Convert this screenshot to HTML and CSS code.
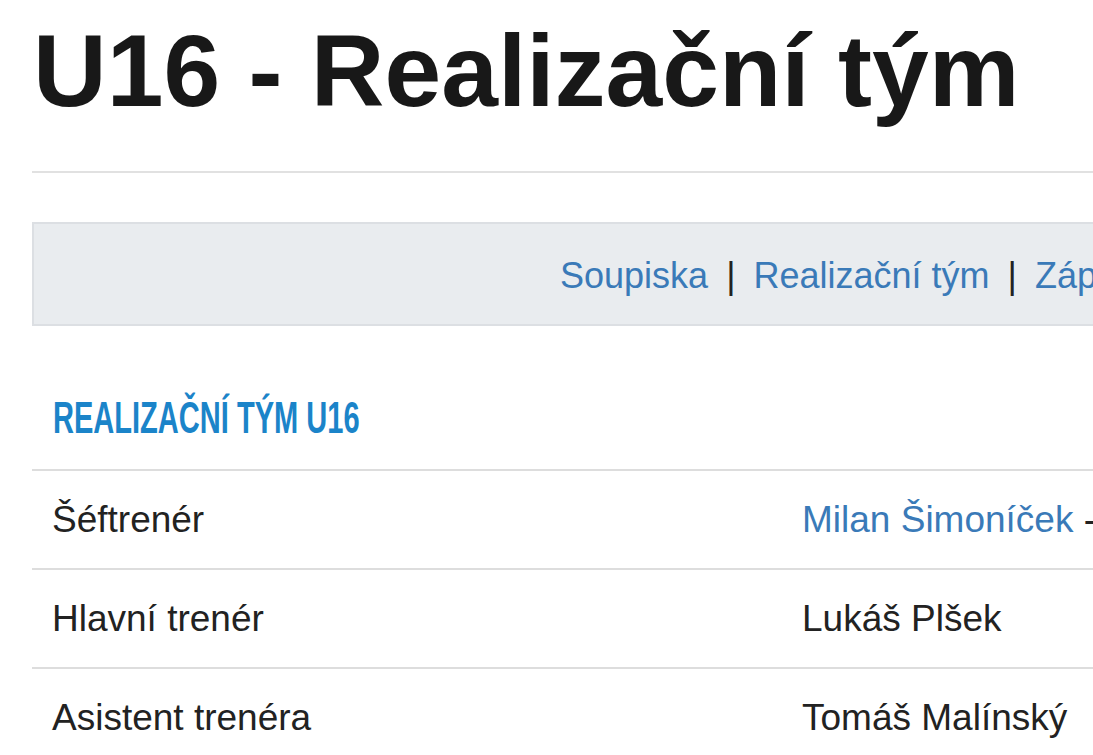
FILE: index.html
```html
<!DOCTYPE html>
<html lang="cs">
<head>
  <meta charset="UTF-8">
  <title>U16 - Realizační tým</title>
  <link rel="stylesheet" href="styles.css">
</head>
<body>
  <div class="page">
    <h1 class="page-title">U16 - Realizační tým</h1>

    <div class="team-nav">
      <a href="#">Soupiska</a> <span class="sep">|</span>
      <a href="#">Realizační tým</a> <span class="sep">|</span>
      <a href="#">Zápasy</a> <span class="sep">|</span>
      <a href="#">Statistiky</a>
    </div>

    <h3 class="section-title"><span>Realizační tým U16</span></h3>

    <table class="staff-table">
      <tbody>
        <tr>
          <td class="role">Šéftrenér</td>
          <td><a href="#">Milan Šimoníček</a> - šéftrenér mládeže</td>
        </tr>
        <tr>
          <td class="role">Hlavní trenér</td>
          <td>Lukáš Plšek</td>
        </tr>
        <tr>
          <td class="role">Asistent trenéra</td>
          <td>Tomáš Malínský</td>
        </tr>
      </tbody>
    </table>
  </div>
</body>
</html>
```

FILE: styles.css
```css
body {
  margin: 0;
  font-family: "Liberation Sans", Arial, sans-serif;
  color: #222;
  background: #fff;
  overflow: hidden;
}
a {
  color: #3a7ab8;
  text-decoration: none;
}
.page {
  width: 1500px;
  padding-left: 32px;
}
.page-title {
  margin: 0;
  padding: 20px 0 49px 1px;
  font-size: 102px;
  line-height: 1;
  font-weight: bold;
  color: #181818;
  border-bottom: 2px solid #e1e1e1;
}
.team-nav {
  margin-top: 49px;
  padding: 34px 0 30px 526px;
  font-size: 36px;
  line-height: 36px;
  background-color: #e9ecef;
  border: 2px solid #dcdfe3;
}
.team-nav .sep {
  color: #222;
  margin: 0 8px;
}
.section-title {
  margin: 70px 0 0 0;
  padding: 0 0 29px 21px;
  font-family: "Liberation Sans Narrow", "Liberation Sans", sans-serif;
  font-size: 44px;
  line-height: 1;
  font-weight: bold;
  text-transform: uppercase;
  color: #1b84c9;
}
.section-title span {
  display: inline-block;
  transform: scaleX(0.66);
  transform-origin: left center;
}
.staff-table {
  width: 100%;
  border-collapse: collapse;
  font-size: 37px;
  line-height: 37px;
}
.staff-table td {
  border-top: 2px solid #dddddd;
  padding: 30px 20px;
  text-align: left;
  white-space: nowrap;
}
.staff-table td.role {
  width: 710px;
}
```
